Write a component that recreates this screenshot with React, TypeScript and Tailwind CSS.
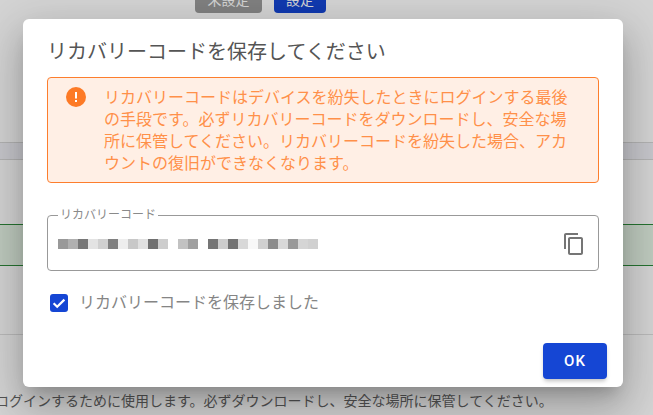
const FONT = "font-['Roboto','Noto_Sans_CJK_JP',sans-serif]";

// mosaic over the recovery code: one grey per 10px cell, null is a gap
const CODE_CELLS: (string | null)[] = [
  '#999999', '#b0b0b0', '#777777', '#e3e3e3', '#d0d0d0', '#808080', '#eeeeee', '#c8c8c8', '#e0e0e0',
  '#707070', '#cdcdcd', null, '#c2c2c2', '#a0a0a0', null, '#757575', '#cdcdcd', '#737373', '#d8d8d8',
  '#f8f8f8', '#d0d0d0', '#8c8c8c', '#d8d8d8', '#999999', '#d5d5d5', '#d0d0d0',
];

function PageBehind() {
  return (
    <div className="flex h-[415px] flex-col overflow-hidden bg-white">
      <div className="flex h-[13px] items-end justify-end gap-3 pr-[327px]">
        <div className="flex h-[26px] w-[67px] items-center justify-center rounded-b bg-[#9a9a9a] text-[14px] text-white">
          未設定
        </div>
        <div className="flex h-[26px] w-[52px] items-center justify-center rounded-b bg-[#1546d4] text-[14px] text-white">
          設定
        </div>
      </div>
      <div className="mt-[129px] h-[18px] border-y border-[#d8d8d8] bg-[#f0f0f6]" />
      <div className="mt-[64px] h-[42px] border-y border-[#2e8b3c] bg-[#e6f4e6]" />
      <div className="mt-[68px] h-px bg-[#e0e0e0]" />
      <p className="mt-[56px] -ml-[5px] whitespace-nowrap text-[14px] leading-5 text-[#666666]">
        ログインするために使用します。必ずダウンロードし、安全な場所に保管してください。
      </p>
    </div>
  );
}

function WarningIcon() {
  return (
    <svg viewBox="0 0 20 20" className="h-5 w-5 shrink-0">
      <circle cx="10" cy="10" r="10" fill="#fd7a26" />
      <rect x="9" y="5" width="2" height="6.5" fill="#ffffff" />
      <rect x="9" y="13" width="2" height="2" fill="#ffffff" />
    </svg>
  );
}

function CopyIcon() {
  return (
    <svg viewBox="0 0 24 24" className="h-6 w-6 shrink-0" fill="#757575">
      <path d="M16 1H4c-1.1 0-2 .9-2 2v14h2V3h12V1zm3 4H8c-1.1 0-2 .9-2 2v14c0 1.1.9 2 2 2h11c1.1 0 2-.9 2-2V7c0-1.1-.9-2-2-2zm0 16H8V7h11v14z" />
    </svg>
  );
}

export default function App() {
  return (
    <div className={`relative h-[415px] w-[653px] overflow-hidden ${FONT}`}>
      <PageBehind />
      <div className="absolute inset-0 bg-black/[0.17] pl-[23px] pt-[19px]">
        <div className="flex h-[368px] w-[600px] flex-col rounded-[6px] bg-white px-6 pt-[20px] shadow-[0_11px_15px_-7px_rgba(0,0,0,0.2),0_24px_38px_3px_rgba(0,0,0,0.14),0_9px_46px_8px_rgba(0,0,0,0.12)]">
          <h2 className="text-[20px] leading-[26px] font-normal text-[#555555]">リカバリーコードを保存してください</h2>

          {/* Warning */}
          <div className="mt-[12px] flex h-[106px] gap-[18px] rounded border border-[#fd7e2d] bg-[#ffefe5] pl-[18px] pt-[9px]">
            <WarningIcon />
            <p className="w-[470px] text-[16px] leading-[22px] text-[#ff9049]">
              リカバリーコードはデバイスを紛失したときにログインする最後の手段です。必ずリカバリーコードをダウンロードし、安全な場所に保管してください。リカバリーコードを紛失した場合、アカウントの復旧ができなくなります。
            </p>
          </div>

          {/* Code field */}
          <fieldset className="mt-[25px] h-[63px] rounded border border-[#999999] pl-[10px] pr-[12px]">
            <legend className="px-[2px] text-[12px] leading-[14px] text-[#8a8a8a]">リカバリーコード</legend>
            <div className="flex items-center justify-between pt-[10px]">
              <div className="flex">
                {CODE_CELLS.map((color, i) => (
                  <span key={i} className="h-[10px] w-[10px]" style={{ backgroundColor: color ?? 'transparent' }} />
                ))}
              </div>
              <CopyIcon />
            </div>
          </fieldset>

          {/* Checkbox */}
          <label className="mt-[20px] flex items-center gap-[11px] pl-[3px] text-[16px] leading-6 text-[#858585]">
            <span className="flex h-[18px] w-[18px] items-center justify-center rounded-[3px] bg-[#1546d4]">
              <svg viewBox="0 0 18 18" className="h-[18px] w-[18px]">
                <path d="M3.6 9.2 7.2 12.8 14.4 5.6" fill="none" stroke="#ffffff" strokeWidth="2.2" />
              </svg>
            </span>
            リカバリーコードを保存しました
          </label>

          <div className="mt-[28px] flex justify-end">
            <button className="-mr-2 flex h-9 w-16 items-center justify-center rounded bg-[#1546d4] text-[15px] font-medium tracking-[1px] text-white shadow-[0_3px_4px_-1px_rgba(0,0,0,0.25)]">
              OK
            </button>
          </div>
        </div>
      </div>
    </div>
  );
}
